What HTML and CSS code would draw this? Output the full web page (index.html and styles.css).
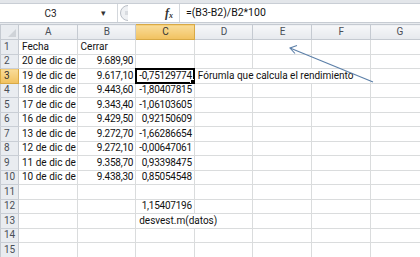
FILE: index.html
```html
<!DOCTYPE html>
<html lang="es">
<head>
    <meta charset="UTF-8">
    <title>Rendimiento</title>
    <link rel="stylesheet" href="styles.css">
</head>
<body>
    <div class="ribbon-edge"></div>
    <div class="formula-bar">
        <div class="name-box">
            <span class="cell-ref">C3</span>
            <span class="drop">&#9662;</span>
        </div>
        <div class="bar-tools">
            <svg class="grip" width="12" height="18" viewBox="0 0 12 18">
                <path d="M10 1.5 A7.5 7.5 0 0 0 10 16.5" fill="#eef0f3" stroke="#b9bec6" stroke-width="1"/>
                <line x1="7" y1="8" x2="10" y2="8" stroke="#c3c7cd" stroke-width="1"/>
                <line x1="7" y1="10" x2="10" y2="10" stroke="#c3c7cd" stroke-width="1"/>
            </svg>
            <span class="fx">f<sub>x</sub></span>
        </div>
        <div class="formula">=(B3-B2)/B2*100</div>
    </div>

    <div class="sheet-wrap">
        <table class="sheet">
            <colgroup>
                <col class="col-rh">
                <col><col><col><col><col><col><col>
            </colgroup>
            <tr class="head">
                <th class="corner"></th>
                <th>A</th><th>B</th><th class="sel">C</th><th>D</th><th>E</th><th>F</th><th>G</th>
            </tr>
            <tr><th>1</th><td>Fecha</td><td>Cerrar</td><td></td><td></td><td></td><td></td><td></td></tr>
            <tr><th>2</th><td>20 de dic de</td><td class="num">9.689,90</td><td></td><td></td><td></td><td></td><td></td></tr>
            <tr><th class="sel">3</th><td>19 de dic de</td><td class="num">9.617,10</td><td class="num active">-0,75129774</td><td colspan="3" class="spill">Fórumla que calcula el rendimiento</td><td></td></tr>
            <tr><th>4</th><td>18 de dic de</td><td class="num">9.443,60</td><td class="num">-1,80407815</td><td></td><td></td><td></td><td></td></tr>
            <tr><th>5</th><td>17 de dic de</td><td class="num">9.343,40</td><td class="num">-1,06103605</td><td></td><td></td><td></td><td></td></tr>
            <tr><th>6</th><td>16 de dic de</td><td class="num">9.429,50</td><td class="num">0,92150609</td><td></td><td></td><td></td><td></td></tr>
            <tr><th>7</th><td>13 de dic de</td><td class="num">9.272,70</td><td class="num">-1,66286654</td><td></td><td></td><td></td><td></td></tr>
            <tr><th>8</th><td>12 de dic de</td><td class="num">9.272,10</td><td class="num">-0,00647061</td><td></td><td></td><td></td><td></td></tr>
            <tr><th>9</th><td>11 de dic de</td><td class="num">9.358,70</td><td class="num">0,93398475</td><td></td><td></td><td></td><td></td></tr>
            <tr><th>10</th><td>10 de dic de</td><td class="num">9.438,30</td><td class="num">0,85054548</td><td></td><td></td><td></td><td></td></tr>
            <tr><th>11</th><td></td><td></td><td></td><td></td><td></td><td></td><td></td></tr>
            <tr><th>12</th><td></td><td></td><td class="num">1,15407196</td><td></td><td></td><td></td><td></td></tr>
            <tr><th>13</th><td></td><td></td><td colspan="2" class="spill">desvest.m(datos)</td><td></td><td></td><td></td></tr>
            <tr><th>14</th><td></td><td></td><td></td><td></td><td></td><td></td><td></td></tr>
            <tr><th>15</th><td></td><td></td><td></td><td></td><td></td><td></td><td></td></tr>
        </table>

        <!-- callout arrow drawn over the grid -->
        <svg class="arrow" width="420" height="257" viewBox="0 0 420 257">
            <line x1="373" y1="59" x2="290" y2="25" stroke="#5b7fa8" stroke-width="1.1"/>
            <polyline points="297,22.5 290,25 295,30.5" fill="none" stroke="#5b7fa8" stroke-width="1.1"/>
        </svg>
    </div>
</body>
</html>
```

FILE: styles.css
```css
body {
    margin: 0;
    width: 420px;
    height: 257px;
    overflow: hidden;
    background-color: #fff;
    font-family: Roboto, "Open Sans", sans-serif;
    font-size: 10px;
    color: #111;
}
.ribbon-edge {
    height: 3px;
    background-color: #e3e6ea;
    border-bottom: 1px solid #c9ced5;
}
.formula-bar {
    display: flex;
    height: 18px;
    background-color: #fff;
    border-bottom: 1px solid #c7ccd3;
}
.name-box {
    display: flex;
    align-items: center;
    width: 117px;
    border-right: 1px solid #d3d7dc;
}
.cell-ref {
    width: 101px;
    text-align: center;
    color: #222;
}
.drop {
    font-size: 9px;
    color: #333;
}
.bar-tools {
    display: flex;
    align-items: center;
    justify-content: space-between;
    width: 62px;
    padding-right: 6px;
    box-sizing: border-box;
    border-right: 1px solid #d3d7dc;
}
.fx {
    font-family: "Liberation Serif", serif;
    font-style: italic;
    font-weight: bold;
    font-size: 12px;
    color: #333;
}
.fx sub {
    font-size: 8px;
    vertical-align: -1px;
}
.formula {
    flex: 1;
    padding-left: 6px;
    line-height: 18px;
    font-size: 10.5px;
    color: #111;
}
.sheet-wrap {
    position: relative;
    background-color: #e8ebef;
    padding-top: 1px;
}
.sheet {
    border-collapse: collapse;
    table-layout: fixed;
    width: 428px;
    background-color: #fff;
}
.sheet col {
    width: 58.6px;
}
.sheet col.col-rh {
    width: 18px;
}
.sheet tr {
    height: 14.5px;
}
.sheet tr.head {
    height: 15px;
}
.sheet th,
.sheet td {
    padding: 0 2px 0 3px;
    overflow: hidden;
    white-space: nowrap;
    line-height: 12px;
    font-weight: normal;
}
.sheet td {
    border: 1px solid #dadcdd;
}
.sheet th {
    background: linear-gradient(#f6f7f9, #e6e9ed);
    border: 1px solid #c5cad1;
    color: #4a4f57;
    text-align: center;
}
.sheet tr:not(.head) th {
    background: #e9ecf0;
    border-color: #c9ced5 #c5cad1;
    text-align: left;
    padding-left: 3px;
    padding-right: 0;
}
.sheet th.corner {
    position: relative;
    background: #e9ecf0;
}
.sheet th.corner::after {
    content: "";
    position: absolute;
    right: 2px;
    bottom: 2px;
    border-left: 8px solid transparent;
    border-bottom: 8px solid #cfd3d8;
}
.sheet th.sel,
.sheet tr:not(.head) th.sel {
    background: linear-gradient(#f9dc98, #f1c15f);
    border-color: #d8a945;
    color: #333;
}
.sheet td.num {
    text-align: right;
    letter-spacing: -0.25px;
    padding-left: 0;
}
.sheet td.spill {
    overflow: visible;
}
.sheet td.active {
    position: relative;
    outline: 2px solid #000;
    outline-offset: -1px;
}
.sheet td.active::after {
    content: "";
    position: absolute;
    right: -3px;
    bottom: -3px;
    width: 5px;
    height: 5px;
    background-color: #000;
    border: 1px solid #fff;
}
.arrow {
    position: absolute;
    top: 0;
    left: 0;
    pointer-events: none;
}
```
